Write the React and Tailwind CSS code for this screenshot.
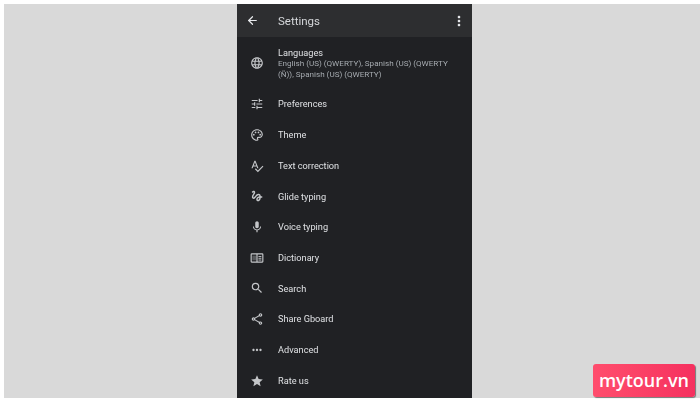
import { ArrowLeft } from 'lucide-react';
import {
  MdLanguage,
  MdOutlineTune,
  MdOutlinePalette,
  MdOutlineSpellcheck,
  MdOutlineGesture,
  MdMic,
  MdSearch,
  MdOutlineShare,
  MdMoreHoriz,
  MdMoreVert,
  MdStar,
} from 'react-icons/md';

function BookIcon({ className }) {
  return (
    <svg viewBox="0 0 24 24" fill="none" stroke="currentColor" className={className}>
      <rect x="2" y="5" width="20" height="14" rx="1" strokeWidth="2" />
      <path d="M12 5v14" strokeWidth="2" />
      <path d="M4 8h7v8H4z" fill="currentColor" stroke="none" opacity="0.35" />
      <path d="M14.5 9.5h5M14.5 12.5h5M14.5 15.5h5" strokeWidth="1.6" />
    </svg>
  );
}

const rows = [
  { icon: MdOutlineTune, label: 'Preferences' },
  { icon: MdOutlinePalette, label: 'Theme' },
  { icon: MdOutlineSpellcheck, label: 'Text correction' },
  { icon: MdOutlineGesture, label: 'Glide typing' },
  { icon: MdMic, label: 'Voice typing' },
  { icon: BookIcon, label: 'Dictionary' },
  { icon: MdSearch, label: 'Search' },
  { icon: MdOutlineShare, label: 'Share Gboard' },
  { icon: MdMoreHoriz, label: 'Advanced' },
  { icon: MdStar, label: 'Rate us' },
];

export default function App() {
  return (
    <div className="relative w-[700px] h-[405px] overflow-hidden bg-white pl-1 pt-1 font-['Roboto',sans-serif]">
      <div className="w-[696px] h-[394px] bg-[#d9d9d9] flex">
        <div className="w-[235px] h-[394px] ml-[233px] bg-[#202124] flex flex-col overflow-hidden blur-[0.3px]">
          {/* Toolbar */}
          <div className="h-[33px] shrink-0 bg-[#2d2e30] flex items-center pl-[9px] pr-[5px]">
            <ArrowLeft className="w-[13px] h-[13px] text-[#e8eaed]" strokeWidth={2.2} />
            <span className="ml-[19px] pt-[2px] text-[11.5px] text-[#d5d7da]">Settings</span>
            <MdMoreVert className="ml-auto w-[16px] h-[16px] text-[#e8eaed]" />
          </div>

          {/* Languages row */}
          <div className="h-[52px] shrink-0 flex items-center pl-[13px] pr-[20px]">
            <MdLanguage className="w-[14px] h-[14px] shrink-0 text-[#c4c6c9]" />
            <div className="ml-[14px] flex flex-col">
              <span className="text-[9.2px] leading-[11px] text-[#dfe1e4]">Languages</span>
              <span className="text-[8.1px] leading-[10.5px] text-[#a6abb0]">
                English (US) (QWERTY), Spanish (US) (QWERTY (Ñ)), Spanish (US) (QWERTY)
              </span>
            </div>
          </div>

          {rows.map((row) => (
            <div key={row.label} className="h-[30.7px] shrink-0 flex items-center pl-[13px]">
              <row.icon className="w-[14px] h-[14px] shrink-0 text-[#c4c6c9]" />
              <span className="ml-[14px] text-[9.2px] text-[#dfe1e4]">{row.label}</span>
            </div>
          ))}
        </div>
      </div>

      {/* Watermark badge */}
      <div className="absolute left-[593px] top-[364px] w-[102px] h-[33px] rounded-[3px] bg-gradient-to-r from-[#ff4d6d] to-[#f5305f] shadow-[1px_1px_1px_rgba(0,0,0,0.45)] flex items-center justify-center">
        <span className="text-[18px] font-semibold text-white font-['Open_Sans',sans-serif]">mytour.vn</span>
      </div>
    </div>
  );
}
